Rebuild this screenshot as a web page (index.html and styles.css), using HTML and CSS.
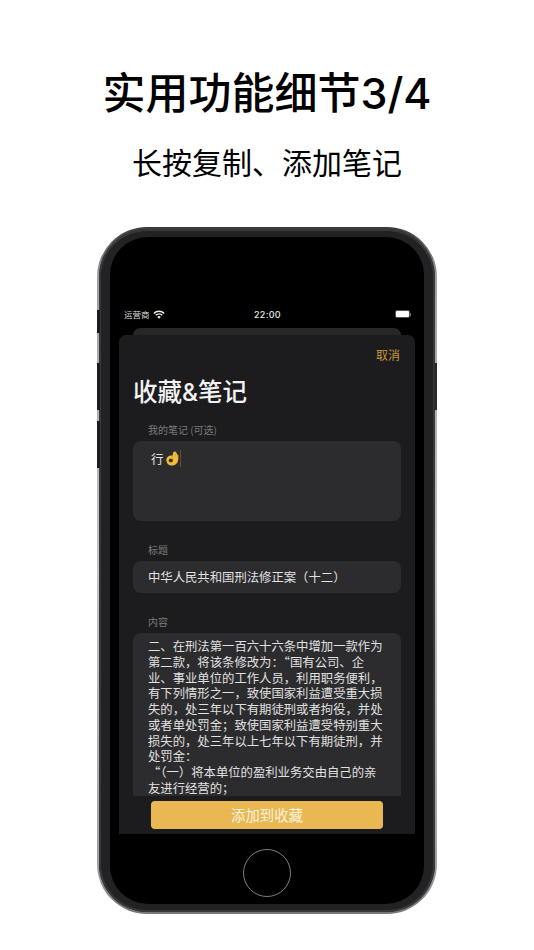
FILE: index.html
```html
<!DOCTYPE html>
<html lang="zh-CN">
<head>
<meta charset="utf-8">
<title>实用功能细节</title>
<link rel="stylesheet" href="styles.css">
</head>
<body>
<header class="hero">
  <h1 class="hero-title">实用功能细节3/4</h1>
  <p class="hero-sub">长按复制、添加笔记</p>
</header>
<div class="phone">
  <span class="side-btn side-mute"></span>
  <span class="side-btn side-up"></span>
  <span class="side-btn side-down"></span>
  <span class="side-btn side-power"></span>
  <div class="bezel">
    <div class="screen">
      <div class="status">
        <div class="status-left">
          <span>运营商</span>
          <svg class="wifi" viewBox="0 0 12 9" width="12" height="9"><path d="M.8 3.400A7.400 7.400 0 0 1 11.200 3.400" fill="none" stroke="#f0f0f0" stroke-width="1.400"/><path d="M2.700 5.300A4.700 4.700 0 0 1 9.300 5.300" fill="none" stroke="#f0f0f0" stroke-width="1.400"/><path d="M6 8.800 4.200 6.900A2.600 2.600 0 0 1 7.800 6.900Z" fill="#f0f0f0"/></svg>
        </div>
        <span class="status-time">22:00</span>
        <div class="battery"><span class="battery-body"><span class="battery-fill"></span></span><span class="battery-tip"></span></div>
      </div>
      <div class="back-sheet"></div>
      <section class="sheet">
        <div class="sheet-bar"><span class="cancel">取消</span></div>
        <h2 class="sheet-title">收藏&amp;笔记</h2>
        <div class="field-label field-label-note">我的笔记 (可选)</div>
        <div class="box box-note">
          <span>行</span>
          <svg class="emoji" viewBox="0 0 14 16" width="13" height="15"><path d="M9 .6C8.300.6 8 1.100 7.800 1.700L7 4.900C4 4.300 1.200 5.800.5 8.600-.2 11.800 1.900 15.100 5.400 15.500 9 16 12 14.200 12.800 11 13.400 8.800 13.500 6.400 13.300 4.600 13.200 4 12.800 3.800 12.400 3.900L11.300 2C10.800 1.100 9.800.5 9 .6Z" fill="#f3bd37"/><ellipse cx="5.200" cy="10.100" rx="2.300" ry="2" fill="#3a3224"/><path d="M7.200 5.200 6.800 7.600M10.400 2.800 10 6M12.300 4 11.900 7.400" stroke="#c98d1c" stroke-width=".6" fill="none"/></svg>
          <span class="caret"></span>
        </div>
        <div class="field-label field-label-title">标题</div>
        <div class="box box-title">中华人民共和国刑法修正案（十二）</div>
        <div class="field-label field-label-content">内容</div>
        <div class="box box-content">
          二、在刑法第一百六十六条中增加一款作为<br>
          第二款，将该条修改为：“国有公司、企<br>
          业、事业单位的工作人员，利用职务便利，<br>
          有下列情形之一，致使国家利益遭受重大损<br>
          失的，处三年以下有期徒刑或者拘役，并处<br>
          或者单处罚金；致使国家利益遭受特别重大<br>
          损失的，处三年以上七年以下有期徒刑，并<br>
          处罚金：<br>
          “（一）将本单位的盈利业务交由自己的亲<br>
          友进行经营的；
        </div>
        <button class="submit" type="button">添加到收藏</button>
      </section>
      <div class="home-area"><span class="home"></span></div>
    </div>
  </div>
</div>
</body>
</html>
```

FILE: styles.css
```css
* { box-sizing: border-box; }
html, body { margin: 0; padding: 0; }
body {
  width: 534px;
  height: 950px;
  overflow: hidden;
  background: #fff;
  font-family: "Noto Sans CJK SC", "Noto Sans", sans-serif;
}
.hero { text-align: center; color: #000; padding-top: 64px; }
.hero-title {
  margin: 0;
  font-family: Inter, "Noto Sans CJK SC", sans-serif;
  font-size: 43px;
  line-height: 58px;
  font-weight: 500;
}
.hero-sub {
  margin: 16px 0 0;
  font-size: 30px;
  line-height: 46px;
  font-weight: 400;
}
.phone {
  position: relative;
  width: 340px;
  height: 687px;
  margin: 43px 0 0 97px;
  border-radius: 50px;
  padding: 2px;
  background: linear-gradient(to bottom, #3a3a3a 0, #a0a0a0 7%, #c4c4c4 50%, #a0a0a0 93%, #777 100%);
}
.side-btn {
  position: absolute;
  width: 3px;
  background: #1c1c1e;
  left: 0;
}
.side-mute { top: 83px; height: 23px; }
.side-up { top: 136px; height: 47px; }
.side-down { top: 194px; height: 47px; }
.side-power { left: auto; right: 0; top: 136px; height: 47px; background: #2a2a2c; }
.bezel {
  height: 100%;
  border-radius: 48px;
  background: #222224;
  box-shadow: inset 0 0 0 2px #38383a;
  padding: 8px 11px;
}
.screen {
  height: 100%;
  border-radius: 38px;
  background: #000;
  padding-top: 68px;
  color: #fff;
  overflow: hidden;
}
.status {
  height: 18px;
  padding: 0 13px 0 14px;
  display: grid;
  grid-template-columns: 1fr auto 1fr;
  align-items: center;
  font-size: 8.5px;
  color: #dcdcdc;
}
.status-left { display: flex; align-items: center; gap: 3px; }
.status-time { font-family: Inter, "Noto Sans", sans-serif; font-size: 9px; font-weight: 500; color: #e8e8e8; letter-spacing: .3px; }
.battery { justify-self: end; display: flex; align-items: center; }
.battery-body { display: block; width: 15px; height: 8px; padding: 1px; border-radius: 2px; background: #555; }
.battery-fill { display: block; height: 100%; border-radius: 1px; background: #fff; }
.battery-tip { width: 1.5px; height: 3px; background: #666; }
.back-sheet {
  height: 7px;
  margin: 5px 23px 0;
  background: #272729;
  border-radius: 7px 7px 0 0;
}
.sheet {
  height: 499px;
  margin: 0 9px;
  background: #1c1c1e;
  border-radius: 7px 7px 0 0;
  padding: 0 14px;
  display: flex;
  flex-direction: column;
}
.sheet-bar { display: flex; justify-content: flex-end; padding: 11px 1px 0 0; height: 29px; }
.cancel { font-size: 12px; line-height: 18px; color: #c6983a; }
.sheet-title {
  margin: 12px 0 0;
  font-family: Inter, "Noto Sans CJK SC", sans-serif;
  font-size: 24.5px;
  line-height: 32px;
  font-weight: 500;
  color: #f2f2f2;
}
.field-label { font-size: 10px; line-height: 14px; color: #7a7a7c; padding-left: 15px; }
.field-label-note { margin-top: 15px; }
.field-label-title { margin-top: 22px; }
.field-label-content { margin-top: 22px; }
.box {
  background: #2c2c2e;
  border-radius: 8px;
  font-size: 12.35px;
  color: #e0e0e0;
  padding-left: 15px;
}
.box-note {
  margin-top: 4px;
  height: 80px;
  padding: 8px 0 0 18px;
  display: flex;
  align-items: flex-start;
  line-height: 19px;
  font-size: 12.5px;
}
.emoji { margin: 2px 0 0 2px; }
.caret { width: 1px; height: 17px; margin: 1px 0 0 1px; background: #5f4f2c; }
.box-title { margin-top: 4px; height: 32px; line-height: 32px; }
.box-content {
  margin-top: 4px;
  height: 163px;
  border-radius: 8px 8px 0 0;
  padding-top: 6px;
  line-height: 15.75px;
  overflow: hidden;
  white-space: nowrap;
}
.submit {
  display: block;
  width: 232px;
  height: 28px;
  margin: 5px 0 0 18px;
  padding: 0;
  border: 0;
  border-radius: 4px;
  background: #e9b852;
  color: #fbf3df;
  font: 400 14.4px/28px "Noto Sans CJK SC", sans-serif;
  text-align: center;
}
.home-area { display: flex; justify-content: center; padding-top: 15px; }
.home {
  width: 48px;
  height: 48px;
  border-radius: 50%;
  border: 1.5px solid #7d7d7d;
}
```
